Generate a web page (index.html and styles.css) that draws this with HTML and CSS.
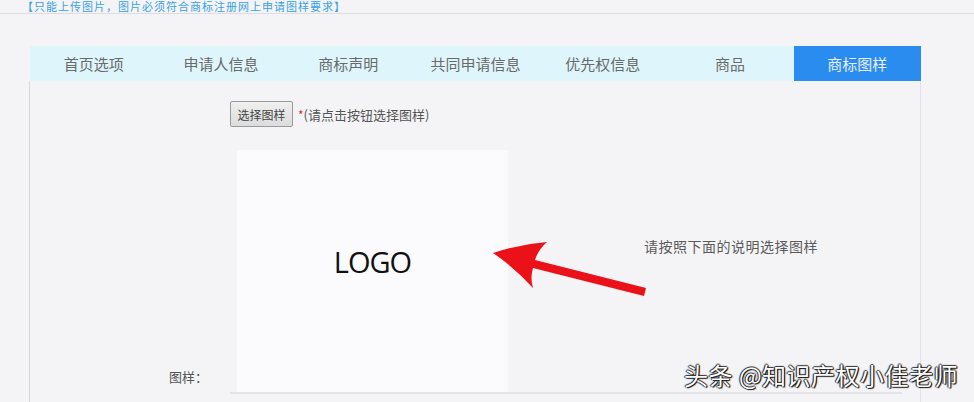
FILE: index.html
```html
<!DOCTYPE html>
<html lang="zh">
<head>
<meta charset="utf-8">
<link rel="stylesheet" href="styles.css">
</head>
<body>
<div class="page">
  <div class="topbar"><span class="hint">【只能上传图片，图片必须符合商标注册网上申请图样要求】</span></div>
  <div class="panel">
    <nav class="tabs">
      <div class="tab">首页选项</div>
      <div class="tab">申请人信息</div>
      <div class="tab">商标声明</div>
      <div class="tab">共同申请信息</div>
      <div class="tab">优先权信息</div>
      <div class="tab">商品</div>
      <div class="tab active">商标图样</div>
    </nav>
    <div class="content">
      <div class="upload-row">
        <button class="btn">选择图样</button>
        <span class="req">*</span><span class="tip">(请点击按钮选择图样)</span>
      </div>
      <div class="preview-row">
        <div class="label">图样：</div>
        <div class="frame">
          <div class="imgbox"><span class="logo">LOGO</span></div>
          <div class="note">请按照下面的说明选择图样</div>
        </div>
      </div>
    </div>
  </div>
  <svg class="arrow" width="180" height="75" viewBox="0 0 180 75">
    <path d="M13 23 Q40 14 67 12 Q58 20 55 30 L166 58 L164 66 L53 38 Q50 48 53 58 Q35 38 13 23 Z" fill="#ea1218"/>
  </svg>
  <div class="watermark">头条 @知识产权小佳老师</div>
</div>
</body>
</html>
```
FILE: styles.css
```css
html, body {
  margin: 0;
  padding: 0;
  background: #f4f4f7;
  overflow: hidden;
}
.page {
  position: relative;
  width: 974px;
  height: 402px;
  overflow: hidden;
  font-family: "Noto Sans CJK SC", "Noto Sans", sans-serif;
  color: #555;
}
.topbar {
  height: 13px;
  border-bottom: 1px solid #dcdce2;
}
.hint {
  display: block;
  font-size: 11px;
  line-height: 13px;
  padding-left: 22px;
  color: #3aa2e4;
  letter-spacing: 1px;
}
.panel {
  margin: 32px 0 0 29px;
  width: 892px;
}
.tabs {
  display: grid;
  grid-template-columns: repeat(7, 1fr);
  height: 35px;
  background: #def6fb;
  margin-left: 1px;
}
.tab {
  display: flex;
  align-items: center;
  justify-content: center;
  font-size: 15px;
  color: #6a6a6a;
}
.tab.active {
  background: #2b8cf0;
  color: #e8f0fb;
}
.content {
  border-left: 1px solid #d6d8e0;
  border-right: 1px solid #e0e0e6;
  height: 340px;
}
.upload-row {
  display: flex;
  align-items: center;
  padding: 20px 0 0 200px;
}
.btn {
  width: 63px;
  height: 26px;
  padding: 0;
  font-family: inherit;
  font-size: 12px;
  color: #444;
  background: linear-gradient(#f0f0f0, #dcdcdc);
  border: 1px solid #9a9a9a;
  border-radius: 2px;
}
.req {
  color: #e03030;
  font-size: 12px;
  margin-left: 5px;
}
.tip {
  font-size: 13px;
  color: #555;
}
.preview-row {
  display: flex;
  margin-top: 23px;
}
.label {
  width: 200px;
  box-sizing: border-box;
  padding: 0 22px 9px 0;
  align-self: flex-end;
  text-align: right;
  font-size: 13px;
  line-height: 16px;
  color: #555;
}
.frame {
  width: 672px;
  display: flex;
  border-bottom: 2px solid #e2e2e7;
}
.imgbox {
  margin-left: 7px;
  width: 271px;
  height: 242px;
  background: #fbfbfd;
  display: flex;
  align-items: center;
  justify-content: center;
}
.logo {
  font-family: "Open Sans", "Liberation Sans", sans-serif;
  font-size: 29px;
  color: #111;
  letter-spacing: -1px;
  margin-bottom: 20px;
}
.note {
  margin-left: 136px;
  padding-top: 87px;
  font-size: 14px;
  line-height: 18px;
  color: #5a5a5a;
  letter-spacing: 0.5px;
}
.arrow {
  position: absolute;
  left: 480px;
  top: 230px;
}
.watermark {
  position: absolute;
  left: 684px;
  top: 360px;
  font-size: 24px;
  line-height: 30px;
  color: #fff;
  letter-spacing: 0.5px;
  text-shadow: 1px 1px 1px #111, -1px 0 1px #222, 0 -1px 1px #333, 1px 0 1px #222;
  white-space: nowrap;
}
```
